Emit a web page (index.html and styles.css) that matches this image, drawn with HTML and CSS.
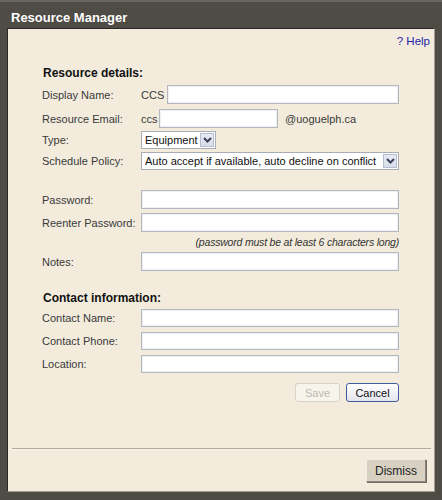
FILE: index.html
```html
<!DOCTYPE html>
<html>
<head>
<meta charset="utf-8">
<link rel="stylesheet" href="styles.css">
</head>
<body>
<div class="window">
  <div class="titlebar">Resource Manager</div>
  <div class="panel">
    <div class="content">
      <div class="help-row"><a class="help" href="#">? Help</a></div>
      <div class="form">
        <div class="heading">Resource details:</div>
        <div class="row r-first">
          <span class="label">Display Name:</span>
          <span class="prefix">CCS</span>
          <span class="input grow"></span>
        </div>
        <div class="row r-email">
          <span class="label">Resource Email:</span>
          <span class="prefix small">ccs</span>
          <span class="input email"></span>
          <span class="suffix">@uoguelph.ca</span>
        </div>
        <div class="row r-sel">
          <span class="label">Type:</span>
          <span class="select type">
            <span class="sel-text">Equipment</span>
            <span class="sel-btn"><svg width="9" height="6" viewBox="0 0 9 6"><path d="M1 1 L4.5 4.5 L8 1" fill="none" stroke="#39415a" stroke-width="2"/></svg></span>
          </span>
        </div>
        <div class="row r-sel">
          <span class="label">Schedule Policy:</span>
          <span class="select policy">
            <span class="sel-text">Auto accept if available, auto decline on conflict</span>
            <span class="sel-btn"><svg width="9" height="6" viewBox="0 0 9 6"><path d="M1 1 L4.5 4.5 L8 1" fill="none" stroke="#39415a" stroke-width="2"/></svg></span>
          </span>
        </div>
        <div class="row r-gap">
          <span class="label">Password:</span>
          <span class="input grow"></span>
        </div>
        <div class="row r-pw2">
          <span class="label">Reenter Password:</span>
          <span class="input grow"></span>
        </div>
        <div class="hint">(password must be at least 6 characters long)</div>
        <div class="row r-notes">
          <span class="label">Notes:</span>
          <span class="input grow"></span>
        </div>
        <div class="heading h2">Contact information:</div>
        <div class="row r-c1">
          <span class="label">Contact Name:</span>
          <span class="input grow"></span>
        </div>
        <div class="row r-c">
          <span class="label">Contact Phone:</span>
          <span class="input grow"></span>
        </div>
        <div class="row r-c">
          <span class="label">Location:</span>
          <span class="input grow"></span>
        </div>
        <div class="buttons">
          <span class="btn save">Save</span>
          <span class="btn cancel">Cancel</span>
        </div>
      </div>
    </div>
    <div class="separator"></div>
    <div class="footer">
      <span class="dismiss">Dismiss</span>
    </div>
  </div>
</div>
</body>
</html>
```
FILE: styles.css
```css
html, body {
  margin: 0;
  padding: 0;
}
body {
  background: #4f4b45;
  font-family: "Liberation Sans", Arial, sans-serif;
  font-size: 11px;
  color: #3a3a3a;
}
.window {
  width: 442px;
  height: 500px;
  box-sizing: border-box;
  display: flex;
  flex-direction: column;
  background: #4f4b45;
  border-top: 2px solid #6a665f;
}
.titlebar {
  height: 26px;
  box-sizing: border-box;
  padding: 8px 0 0 11px;
  color: #fff;
  font-weight: bold;
  font-size: 13px;
  line-height: 15px;
}
.panel {
  margin-left: 7px;
  width: 428px;
  height: 464px;
  box-sizing: border-box;
  background: #f3ecdd;
  border-top: 1px solid #2b2926;
  border-left: 1px solid #2b2926;
  border-right: 1px solid #a39e93;
  border-bottom: 1px solid #a39e93;
  display: flex;
  flex-direction: column;
}
.content {
  flex: 1;
  display: flex;
  flex-direction: column;
}
.help-row {
  display: flex;
  justify-content: flex-end;
  padding: 5px 4px 0 0;
  height: 14px;
}
.help {
  color: #2424a8;
  text-decoration: none;
  font-size: 11.5px;
  line-height: 14px;
}
.form {
  padding: 18px 0 0 34px;
  width: 357px;
  display: flex;
  flex-direction: column;
}
.heading {
  font-weight: bold;
  color: #111;
  font-size: 12px;
  line-height: 14px;
  padding-left: 1px;
}
.h2 {
  margin-top: 20px;
}
.row {
  display: flex;
  align-items: center;
  height: 19px;
}
.r-first { margin-top: 5px; }
.r-email { margin-top: 5px; }
.r-sel { margin-top: 3px; height: 18px; }
.r-gap { margin-top: 20px; }
.r-pw2 { margin-top: 4px; }
.r-notes { margin-top: 3px; }
.r-c1 { margin-top: 4px; height: 18px; }
.r-c { margin-top: 5px; height: 18px; }
.label {
  width: 99px;
  flex: none;
}
.prefix {
  width: 26px;
  flex: none;
}
.prefix.small {
  width: 18px;
}
.input {
  height: 100%;
  box-sizing: border-box;
  border: 1px solid #b3b7bf;
  background: #fff;
  box-shadow: inset 0 0 0 1px #eef0f3;
}
.grow {
  flex: 1;
  min-width: 0;
}
.email {
  width: 119px;
  flex: none;
}
.suffix {
  margin-left: 7px;
}
.select {
  height: 100%;
  box-sizing: border-box;
  border: 1px solid #a9adb5;
  background: #fff;
  display: flex;
  align-items: center;
  color: #111;
  font-size: 11px;
  padding-left: 3px;
  padding-right: 1px;
  min-width: 0;
}
.type {
  width: 75px;
  flex: none;
}
.policy {
  flex: 1;
}
.sel-text {
  flex: 1;
  min-width: 0;
  white-space: nowrap;
  overflow: hidden;
}
.sel-btn {
  flex: none;
  width: 14px;
  height: 14px;
  box-sizing: border-box;
  border: 1px solid #b6bdd2;
  background: linear-gradient(#e8ebf3, #d7dcea);
  display: flex;
  align-items: center;
  justify-content: center;
}
.hint {
  margin-top: 3px;
  text-align: right;
  font-style: italic;
  line-height: 14px;
  color: #333;
  font-size: 10.5px;
  letter-spacing: -0.2px;
}
.buttons {
  margin-top: 10px;
  display: flex;
  justify-content: flex-end;
  gap: 6px;
}
.btn {
  height: 19px;
  box-sizing: border-box;
  border-radius: 3px;
  display: flex;
  align-items: center;
  justify-content: center;
  font-size: 11px;
}
.save {
  width: 45px;
  border: 1px solid #d6d2c8;
  background: #f7f4ec;
  color: #bdb9b0;
}
.cancel {
  width: 53px;
  border: 1px solid #3f5d9c;
  background: linear-gradient(#ffffff, #e4e5ee);
  color: #111;
}
.separator {
  margin: 0 3px 0 4px;
  height: 0;
  border-top: 1px solid #b2ab9c;
  border-bottom: 1px solid #f8f4ea;
}
.footer {
  display: flex;
  justify-content: flex-end;
  padding: 9px 8px 9px 0;
}
.dismiss {
  width: 60px;
  height: 23px;
  box-sizing: border-box;
  background: #d8d1c2;
  border: 1px solid #8d887e;
  border-top-color: #f1ede4;
  border-left-color: #f1ede4;
  box-shadow: 1px 1px 0 #6f6b63;
  display: flex;
  align-items: center;
  justify-content: center;
  color: #222;
  font-size: 12px;
}
```
